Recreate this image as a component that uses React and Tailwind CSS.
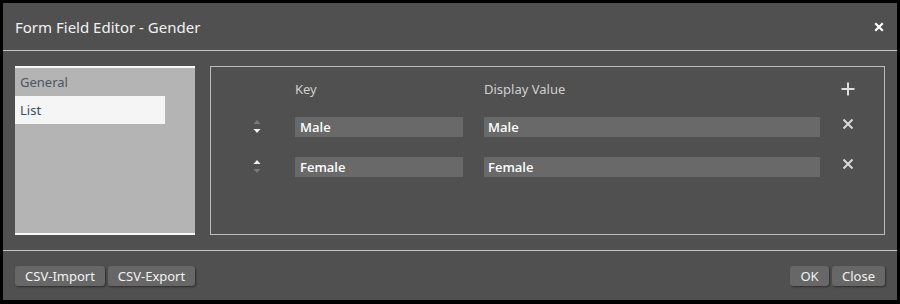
import React from "react";

function Arrows({ upActive }) {
  return (
    <svg width="10" height="16" viewBox="0 0 10 16">
      <polygon points="5,1 8.5,5 1.5,5" fill={upActive ? "#f2f2f2" : "#7a7a7a"} />
      <polygon points="1.5,10 8.5,10 5,14" fill={upActive ? "#7a7a7a" : "#f2f2f2"} />
    </svg>
  );
}

function XIcon({ size = 12, stroke = 2, color = "#dcdcdc" }) {
  return (
    <svg width={size} height={size} viewBox="0 0 12 12">
      <path d="M1.5 1.5 L10.5 10.5 M10.5 1.5 L1.5 10.5" stroke={color} strokeWidth={stroke} />
    </svg>
  );
}

const inputFont = { fontFamily: '"Open Sans", "Noto Sans", sans-serif' };

function Row({ k, v, upActive }) {
  return (
    <div className="flex items-center h-[20px]">
      <div className="w-[84px] pl-[41px] flex items-center">
        <Arrows upActive={upActive} />
      </div>
      <div className="w-[168px] h-[20px] bg-[#696969] text-white text-[13px] font-semibold pl-[5px] pt-[1px] flex items-center" style={inputFont}>{k}</div>
      <div className="w-[336px] h-[20px] ml-[21px] bg-[#696969] text-white text-[13px] font-semibold pl-[4px] pt-[1px] flex items-center" style={inputFont}>{v}</div>
      <div className="w-[55px] flex justify-center -mt-[7px]">
        <XIcon size={12} stroke={2} color="#dadada" />
      </div>
    </div>
  );
}

function Btn({ children, w }) {
  return (
    <div className={`${w} h-[20px] pt-[1px] bg-[#676767] rounded-[3px] shadow-[1px_1px_2px_rgba(0,0,0,0.45)] text-[#f2f2f2] text-[13px] flex items-center justify-center`}>
      {children}
    </div>
  );
}

export default function App() {
  return (
    <div className="w-[900px] h-[304px] bg-black pt-[3px] px-[3px]" style={{ fontFamily: '"Noto Sans", "Open Sans", sans-serif' }}>
      <div className="w-[894px] h-[297px] bg-[#505050] flex flex-col">
        <div className="h-[47px] flex items-center justify-between pl-[12px] pr-[12px]">
          <div className="text-[15px] text-[#f2f2f2] pt-[1px]">Form Field Editor - Gender</div>
          <div className="pr-[1px] pt-[1px]">
            <XIcon size={10} stroke={2.6} color="#ffffff" />
          </div>
        </div>
        <div className="h-px bg-[#c4c4c4]" />
        <div className="h-[199px] px-[12px] py-[15px] flex gap-[15px]">
          <div className="w-[180px] h-[169px] bg-[#b4b4b4] border-t-2 border-b-2 border-[#f7f7f7]">
            <div className="h-[28px] w-[150px] flex items-center pl-[5px] pt-[1px] text-[13px] text-[#4b5663]">General</div>
            <div className="h-[28px] w-[150px] flex items-center pl-[5px] pt-[1px] text-[13px] text-[#3a4c60] bg-[#f5f5f5]">List</div>
          </div>
          <div className="flex-1 h-[169px] border border-[#bcbcbc] pt-[12px]">
            <div className="flex items-center h-[20px]">
              <div className="w-[84px]" />
              <div className="w-[168px] text-[13px] text-[#cfcfcf] pt-[1px]">Key</div>
              <div className="w-[336px] ml-[21px] text-[13px] text-[#cfcfcf] pt-[1px]">Display Value</div>
              <div className="w-[55px] flex justify-center">
                <svg width="14" height="14" viewBox="0 0 14 14">
                  <path d="M7 0.5 V13.5 M0.5 7 H13.5" stroke="#dedede" strokeWidth="2" />
                </svg>
              </div>
            </div>
            <div className="mt-[18px]">
              <Row k="Male" v="Male" upActive={false} />
            </div>
            <div className="mt-[20px]">
              <Row k="Female" v="Female" upActive={true} />
            </div>
          </div>
        </div>
        <div className="h-px bg-[#c4c4c4]" />
        <div className="flex justify-between px-[12px] pt-[15px]">
          <div className="flex gap-[3px]">
            <Btn w="w-[90px]">CSV-Import</Btn>
            <Btn w="w-[87px]">CSV-Export</Btn>
          </div>
          <div className="flex gap-[3px]">
            <Btn w="w-[39px]">OK</Btn>
            <Btn w="w-[53px]">Close</Btn>
          </div>
        </div>
      </div>
    </div>
  );
}
